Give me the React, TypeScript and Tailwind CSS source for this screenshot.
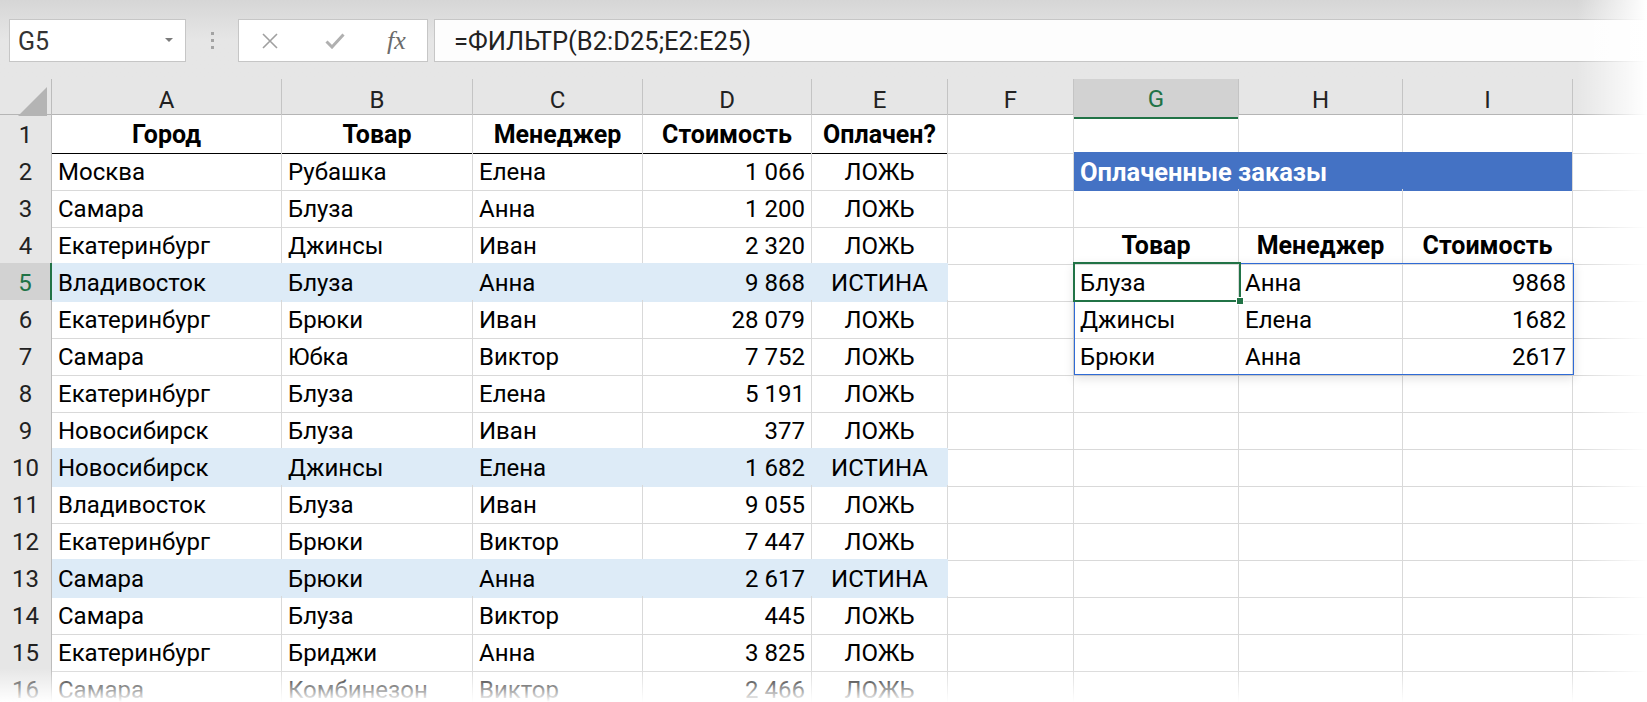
import React from "react";

type Align = "l" | "c" | "r";
type C = { t?: string; a?: Align; b?: boolean };

const GRID =
  "grid grid-cols-[52px_230px_191px_170px_169px_136px_126px_165px_164px_170px_1fr]";

const LETTERS = ["A", "B", "C", "D", "E", "F", "G", "H", "I"];

// A-E source data; hl = row highlighted (оплачен)
const data: { v: string[]; hl?: boolean }[] = [
  { v: ["Москва", "Рубашка", "Елена", "1 066", "ЛОЖЬ"] },
  { v: ["Самара", "Блуза", "Анна", "1 200", "ЛОЖЬ"] },
  { v: ["Екатеринбург", "Джинсы", "Иван", "2 320", "ЛОЖЬ"] },
  { v: ["Владивосток", "Блуза", "Анна", "9 868", "ИСТИНА"], hl: true },
  { v: ["Екатеринбург", "Брюки", "Иван", "28 079", "ЛОЖЬ"] },
  { v: ["Самара", "Юбка", "Виктор", "7 752", "ЛОЖЬ"] },
  { v: ["Екатеринбург", "Блуза", "Елена", "5 191", "ЛОЖЬ"] },
  { v: ["Новосибирск", "Блуза", "Иван", "377", "ЛОЖЬ"] },
  { v: ["Новосибирск", "Джинсы", "Елена", "1 682", "ИСТИНА"], hl: true },
  { v: ["Владивосток", "Блуза", "Иван", "9 055", "ЛОЖЬ"] },
  { v: ["Екатеринбург", "Брюки", "Виктор", "7 447", "ЛОЖЬ"] },
  { v: ["Самара", "Брюки", "Анна", "2 617", "ИСТИНА"], hl: true },
  { v: ["Самара", "Блуза", "Виктор", "445", "ЛОЖЬ"] },
  { v: ["Екатеринбург", "Бриджи", "Анна", "3 825", "ЛОЖЬ"] },
  { v: ["Самара", "Комбинезон", "Виктор", "2 466", "ЛОЖЬ"] },
];

// G-I results, keyed by sheet row number
const side: Record<number, C[]> = {
  4: [
    { t: "Товар", a: "c", b: true },
    { t: "Менеджер", a: "c", b: true },
    { t: "Стоимость", a: "c", b: true },
  ],
  5: [{ t: "Блуза" }, { t: "Анна" }, { t: "9868", a: "r" }],
  6: [{ t: "Джинсы" }, { t: "Елена" }, { t: "1682", a: "r" }],
  7: [{ t: "Брюки" }, { t: "Анна" }, { t: "2617", a: "r" }],
};

const justify: Record<Align, string> = {
  l: "justify-start",
  c: "justify-center",
  r: "justify-end",
};

function Cell({ c, hl, under }: { c?: C; hl?: boolean; under?: boolean }) {
  const bg = hl ? "bg-[#ddebf7] border-r-[#ddebf7]" : "border-r-[#d9d9d9]";
  const bb = under ? "border-b-black" : hl ? "border-b-[#ddebf7]" : "border-b-[#d9d9d9]";
  return (
    <div
      className={`flex items-center px-[6px] pt-[2px] border-r border-b ${bg} ${bb} ${justify[c?.a ?? "l"]} ${c?.b ? "font-bold text-[25px]" : ""} overflow-hidden whitespace-nowrap text-black`}
    >
      {c?.t}
    </div>
  );
}

function RowHead({ n, sel }: { n: number; sel?: boolean }) {
  return (
    <div
      className={`flex items-center justify-center pt-[2px] border-b border-b-[#cfcfcf] ${
        sel
          ? "bg-[#d2d2d2] text-[#217346] border-r-2 border-r-[#217346]"
          : "bg-[#e6e6e6] text-[#222] border-r border-r-[#bcbcbc]"
      }`}
    >
      {n}
    </div>
  );
}

function FormulaBar() {
  return (
    <div className="h-[79px] bg-[#e6e6e6] bg-gradient-to-b from-[#d6d6d6] via-[#e6e6e6] to-[#e6e6e6] pt-[19px] flex">
      <div className="ml-[9px] w-[177px] h-[43px] border border-[#c6c6c6] bg-white flex items-center pl-[8px] pr-[12px] text-[25px] text-[#333]">
        <span className="flex-1 pt-[2px]">G5</span>
        <svg width="8" height="5" viewBox="0 0 8 5">
          <polygon points="0,0 8,0 4,4" fill="#7b7b7b" />
        </svg>
      </div>
      <div className="w-[52px] h-[43px] flex flex-col items-center justify-center gap-[4px]">
        <span className="w-[3px] h-[3px] bg-[#a3a3a3]" />
        <span className="w-[3px] h-[3px] bg-[#a3a3a3]" />
        <span className="w-[3px] h-[3px] bg-[#a3a3a3]" />
      </div>
      <div className="w-[190px] h-[43px] border border-[#c6c6c6] bg-white flex items-center">
        <svg className="ml-[23px]" width="16" height="16" viewBox="0 0 16 16">
          <path d="M1 1 L15 15 M15 1 L1 15" stroke="#a0a0a0" strokeWidth="1.6" />
        </svg>
        <svg className="ml-[47px]" width="20" height="16" viewBox="0 0 20 16">
          <path d="M1.5 8.5 L7 14 L18.5 1.5" stroke="#b0b0b0" strokeWidth="3" fill="none" />
        </svg>
        <span className="ml-[42px] font-['Liberation_Serif',serif] italic text-[26px] text-[#6b6b6b] leading-none">
          fx
        </span>
      </div>
      <div className="ml-[6px] flex-1 h-[43px] border-y border-l border-[#c6c6c6] bg-[#fdfdfd] flex items-center pl-[19px] pt-[2px] text-[25.5px] text-[#222]">
        =ФИЛЬТР(B2:D25;E2:E25)
      </div>
    </div>
  );
}

export default function App() {
  return (
    <div className="relative w-[1647px] h-[702px] overflow-hidden bg-white font-['Roboto',sans-serif] text-[24px]">
      <FormulaBar />

      <div className="relative">
        {/* column headers */}
        <div className={`${GRID} h-[36px] bg-[#e6e6e6] border-b border-[#b5b5b5]`}>
          <div className="relative border-r border-[#bcbcbc]">
            <svg className="absolute right-[4px] bottom-[3px]" width="29" height="29" viewBox="0 0 29 29">
              <polygon points="29,0 29,29 0,29" fill="#b4b4b4" />
            </svg>
          </div>
          {LETTERS.map((l) => (
            <div
              key={l}
              className={`flex items-center justify-center pt-[2px] border-r border-[#c4c4c4] ${
                l === "G" ? "bg-[#d2d2d2] text-[#217346] border-b-2 border-b-[#217346]" : "text-[#222]"
              }`}
            >
              {l}
            </div>
          ))}
          <div />
        </div>

        {/* row 1: headings */}
        <div className={`${GRID} h-[37px]`}>
          <RowHead n={1} />
          {["Город", "Товар", "Менеджер", "Стоимость", "Оплачен?"].map((t) => (
            <Cell key={t} c={{ t, a: "c", b: true }} under />
          ))}
          <Cell />
          <Cell />
          <Cell />
          <Cell />
          <div className="border-b border-[#d9d9d9]" />
        </div>

        {data.map((r, i) => {
          const n = i + 2;
          const s = side[n];
          return (
            <div key={n} className={`${GRID} h-[37px]`}>
              <RowHead n={n} sel={n === 5} />
              <Cell c={{ t: r.v[0] }} hl={r.hl} />
              <Cell c={{ t: r.v[1] }} hl={r.hl} />
              <Cell c={{ t: r.v[2] }} hl={r.hl} />
              <Cell c={{ t: r.v[3], a: "r" }} hl={r.hl} />
              <Cell c={{ t: r.v[4], a: "c" }} hl={r.hl} />
              <Cell />
              {n === 2 ? (
                <div className="col-span-3 flex items-center pl-[6px] pt-[1px] bg-[#4472c4] text-white font-bold text-[25.5px] border-r border-[#d9d9d9] whitespace-nowrap">
                  Оплаченные заказы
                </div>
              ) : (
                <>
                  <Cell c={s?.[0]} />
                  <Cell c={s?.[1]} />
                  <Cell c={s?.[2]} />
                </>
              )}
              <div className="border-b border-[#d9d9d9]" />
            </div>
          );
        })}

        {/* spill range G5:I7 */}
        <div className="absolute left-[1074px] top-[184px] w-[500px] h-[112px] border border-[#2f6bd6] shadow-[0_3px_10px_rgba(0,0,0,0.13)] pointer-events-none" />
        {/* active cell G5 */}
        <div className="absolute left-[1073px] top-[183px] w-[168px] h-[40px] border-2 border-[#217346] pointer-events-none">
          <div className="absolute right-[-5px] bottom-[-5px] w-[8px] h-[8px] bg-[#217346] border border-white" />
        </div>
      </div>

      {/* torn-edge fades */}
      <div className="absolute top-0 right-0 w-[70px] h-full bg-gradient-to-r from-transparent to-white pointer-events-none" />
      <div className="absolute left-0 bottom-0 w-full h-[34px] bg-gradient-to-b from-transparent to-white pointer-events-none" />
    </div>
  );
}
